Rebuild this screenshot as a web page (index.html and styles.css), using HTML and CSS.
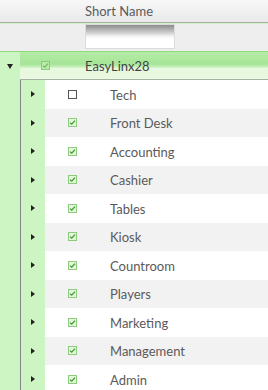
FILE: index.html
```html
<!DOCTYPE html>
<html>
<head>
<meta charset="utf-8">
<link rel="stylesheet" href="styles.css">
</head>
<body>
<div class="grid">
  <div class="header"><span class="head-label">Short Name</span></div>
  <div class="filter"><div class="filter-input"></div></div>
  <div class="group">
    <div class="group-exp"><span class="tri-down"></span></div>
    <div class="group-row">
      <span class="cb-wrap"><svg class="cb" width="9" height="9" viewBox="0 0 9 9"><rect x="0.5" y="0.5" width="8" height="8" fill="#b9eba9" stroke="#8ccb7c"/><path d="M2 4.6 L3.7 6.2 L7 2.6" fill="none" stroke="#79b86a" stroke-width="1.3"/></svg></span>
      <span class="group-label">EasyLinx28</span>
    </div>
  </div>
  <div class="body">
    <div class="gutter"></div>
    <div class="children">
      <div class="row"><div class="exp"><span class="tri-right"></span></div><div class="cell"><span class="cb-slot"><svg width="9" height="9" viewBox="0 0 9 9"><rect x="0.5" y="0.5" width="8" height="8" fill="#fff" stroke="#555"/></svg></span><span class="label">Tech</span></div></div>
      <div class="row alt"><div class="exp"><span class="tri-right"></span></div><div class="cell"><span class="cb-slot"><svg width="9" height="9" viewBox="0 0 9 9"><rect x="0.5" y="0.5" width="8" height="8" fill="#e4f6dc" stroke="#8dcc7e"/><path d="M2 4.6 L3.7 6.2 L7 2.6" fill="none" stroke="#3f9a2e" stroke-width="1.3"/></svg></span><span class="label">Front Desk</span></div></div>
      <div class="row"><div class="exp"><span class="tri-right"></span></div><div class="cell"><span class="cb-slot"><svg width="9" height="9" viewBox="0 0 9 9"><rect x="0.5" y="0.5" width="8" height="8" fill="#e4f6dc" stroke="#8dcc7e"/><path d="M2 4.6 L3.7 6.2 L7 2.6" fill="none" stroke="#3f9a2e" stroke-width="1.3"/></svg></span><span class="label">Accounting</span></div></div>
      <div class="row alt"><div class="exp"><span class="tri-right"></span></div><div class="cell"><span class="cb-slot"><svg width="9" height="9" viewBox="0 0 9 9"><rect x="0.5" y="0.5" width="8" height="8" fill="#e4f6dc" stroke="#8dcc7e"/><path d="M2 4.6 L3.7 6.2 L7 2.6" fill="none" stroke="#3f9a2e" stroke-width="1.3"/></svg></span><span class="label">Cashier</span></div></div>
      <div class="row"><div class="exp"><span class="tri-right"></span></div><div class="cell"><span class="cb-slot"><svg width="9" height="9" viewBox="0 0 9 9"><rect x="0.5" y="0.5" width="8" height="8" fill="#e4f6dc" stroke="#8dcc7e"/><path d="M2 4.6 L3.7 6.2 L7 2.6" fill="none" stroke="#3f9a2e" stroke-width="1.3"/></svg></span><span class="label">Tables</span></div></div>
      <div class="row alt"><div class="exp"><span class="tri-right"></span></div><div class="cell"><span class="cb-slot"><svg width="9" height="9" viewBox="0 0 9 9"><rect x="0.5" y="0.5" width="8" height="8" fill="#e4f6dc" stroke="#8dcc7e"/><path d="M2 4.6 L3.7 6.2 L7 2.6" fill="none" stroke="#3f9a2e" stroke-width="1.3"/></svg></span><span class="label">Kiosk</span></div></div>
      <div class="row"><div class="exp"><span class="tri-right"></span></div><div class="cell"><span class="cb-slot"><svg width="9" height="9" viewBox="0 0 9 9"><rect x="0.5" y="0.5" width="8" height="8" fill="#e4f6dc" stroke="#8dcc7e"/><path d="M2 4.6 L3.7 6.2 L7 2.6" fill="none" stroke="#3f9a2e" stroke-width="1.3"/></svg></span><span class="label">Countroom</span></div></div>
      <div class="row alt"><div class="exp"><span class="tri-right"></span></div><div class="cell"><span class="cb-slot"><svg width="9" height="9" viewBox="0 0 9 9"><rect x="0.5" y="0.5" width="8" height="8" fill="#e4f6dc" stroke="#8dcc7e"/><path d="M2 4.6 L3.7 6.2 L7 2.6" fill="none" stroke="#3f9a2e" stroke-width="1.3"/></svg></span><span class="label">Players</span></div></div>
      <div class="row"><div class="exp"><span class="tri-right"></span></div><div class="cell"><span class="cb-slot"><svg width="9" height="9" viewBox="0 0 9 9"><rect x="0.5" y="0.5" width="8" height="8" fill="#e4f6dc" stroke="#8dcc7e"/><path d="M2 4.6 L3.7 6.2 L7 2.6" fill="none" stroke="#3f9a2e" stroke-width="1.3"/></svg></span><span class="label">Marketing</span></div></div>
      <div class="row alt"><div class="exp"><span class="tri-right"></span></div><div class="cell"><span class="cb-slot"><svg width="9" height="9" viewBox="0 0 9 9"><rect x="0.5" y="0.5" width="8" height="8" fill="#e4f6dc" stroke="#8dcc7e"/><path d="M2 4.6 L3.7 6.2 L7 2.6" fill="none" stroke="#3f9a2e" stroke-width="1.3"/></svg></span><span class="label">Management</span></div></div>
      <div class="row"><div class="exp"><span class="tri-right"></span></div><div class="cell"><span class="cb-slot"><svg width="9" height="9" viewBox="0 0 9 9"><rect x="0.5" y="0.5" width="8" height="8" fill="#e4f6dc" stroke="#8dcc7e"/><path d="M2 4.6 L3.7 6.2 L7 2.6" fill="none" stroke="#3f9a2e" stroke-width="1.3"/></svg></span><span class="label">Admin</span></div></div>
    </div>
  </div>
</div>
</body>
</html>
```

FILE: styles.css
```css
html, body {
  margin: 0;
  padding: 0;
  background: #ffffff;
  overflow: hidden;
}
.grid {
  width: 268px;
  height: 390px;
  font-family: Lato, "Liberation Sans", sans-serif;
  font-size: 13px;
  color: #5a5a5a;
  overflow: hidden;
  background: #ccf5c3;
}
.header {
  height: 22px;
  border-bottom: 1px solid #ababab;
  background: linear-gradient(#f8f8f8, #e9e9e9);
  display: flex;
  align-items: center;
  padding-left: 85px;
}
.head-label {
  color: #5a5a5a;
}
.filter {
  height: 27px;
  background: #eeeeee;
  border-bottom: 1px solid #8fd97e;
  padding-left: 85px;
}
.filter-input {
  margin-top: 1px;
  width: 88px;
  height: 23px;
  border: 1px solid #dcdcdc;
  background: linear-gradient(#8c8c8c 0%, #bdbdbd 25%, #f4f4f4 50%, #ffffff 60%);
}
.group {
  display: flex;
  height: 28px;
}
.group-exp {
  width: 20px;
  background: #ccf5c3;
  display: flex;
  align-items: center;
  justify-content: center;
}
.tri-down {
  width: 0;
  height: 0;
  border-left: 3px solid transparent;
  border-right: 3px solid transparent;
  border-top: 5px solid #222;
  margin-top: 1px;
}
.group-row {
  flex: 1;
  display: flex;
  align-items: center;
  border-bottom: 1px solid #a6b3a3;
  background: linear-gradient(#b4eca6 0%, #a6e597 45%, #c9f0bd 56%, #e6f8dd 60%, #e9f9e1 100%);
}
.cb-wrap {
  width: 9px;
  height: 9px;
  margin-left: 21px;
  display: flex;
}
.group-label {
  margin-left: 35px;
  color: #444444;
}
.body {
  display: flex;
}
.gutter {
  width: 20px;
  background: #ccf5c3;
}
.children {
  flex: 1;
  border-left: 1px solid #858585;
}
.row {
  display: flex;
  height: 28.5px;
}
.exp {
  width: 24px;
  background: #ccf5c3;
  display: flex;
  align-items: center;
  justify-content: center;
}
.tri-right {
  width: 0;
  height: 0;
  border-top: 3px solid transparent;
  border-bottom: 3px solid transparent;
  border-left: 4px solid #222;
}
.cell {
  flex: 1;
  display: flex;
  align-items: center;
  background: #ffffff;
}
.row.alt .cell {
  background: #f2f2f2;
}
.cb-slot {
  width: 9px;
  height: 9px;
  margin-left: 23px;
  display: flex;
}
.label {
  margin-left: 33px;
  padding-top: 1px;
}
```
